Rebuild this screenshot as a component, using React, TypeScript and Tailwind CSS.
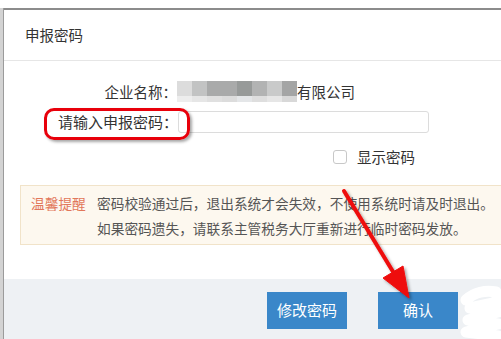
const font = { fontFamily: '"Noto Sans CJK SC", "Noto Sans", sans-serif' };

const blurTop = ['#dcdcdc', '#c2c3c3', '#a9aaaa', '#a9aaaa', '#979a99', '#b2b3b3', '#c9caca', '#a4a5a5'];
const blurBottom = ['#ededed', '#e6e6e6', '#e0e0e0', '#dcdcdc', '#e4e6e8', '#dedede', '#e6e6e6', '#d8d8d8'];

function BlurredName() {
  return (
    <div className="flex h-[21px] w-[120px] flex-col">
      <div className="flex h-[15px]">
        {blurTop.map((c, i) => (
          <div key={i} className="h-full flex-1" style={{ backgroundColor: c }} />
        ))}
      </div>
      <div className="flex h-[6px]">
        {blurBottom.map((c, i) => (
          <div key={i} className="h-full flex-1" style={{ backgroundColor: c }} />
        ))}
      </div>
    </div>
  );
}

export default function App() {
  return (
    <div className="relative h-[339px] w-[501px] overflow-hidden bg-white pt-[8px] text-[#333]" style={font}>
      <div className="flex h-full">
        {/* page edge behind dialog */}
        <div className="w-[3px] shrink-0 bg-[#d3d3d3]" />
        <div className="w-[1px] shrink-0 bg-[#9b9b9b]" />

        <div className="flex w-[520px] shrink-0 flex-col border-t-2 border-[#8c8c8c] bg-white">
          {/* header */}
          <div className="flex h-[51px] items-center border-b border-[#e6e6e6] px-[21px] text-[14.5px] text-[#333]">
            申报密码
          </div>

          {/* body */}
          <div className="flex flex-col pt-[20px] text-[14.5px]">
            <div className="flex h-[21px] items-center">
              <div className="w-[173px] text-right">企业名称：</div>
              <BlurredName />
              <span>有限公司</span>
            </div>

            <div className="mt-[9px] flex h-[22px] items-center">
              <div className="w-[174px] text-right text-[15px]">请输入申报密码：</div>
              <div className="h-[22px] w-[251px] rounded-[3px] border border-[#dcdcdc] bg-white" />
            </div>

            <div className="mt-[16px] flex h-[16px] items-center pl-[329px]">
              <div className="h-[14px] w-[14px] rounded-[3px] border border-[#c8c8c8] bg-white" />
              <span className="ml-[10px]">显示密码</span>
            </div>

            <div className="mt-[20px] ml-[16px] flex h-[60px] border border-[#f1e3c9] bg-[#fdf8ef] pt-[5px] pl-[10px] text-[13.7px] leading-[25px] text-[#555]">
              <span className="w-[66px] shrink-0 text-[#e2775a]">温馨提醒</span>
              <div className="flex flex-col whitespace-nowrap">
                <span>密码校验通过后，退出系统才会失效，不使用系统时请及时退出。</span>
                <span>如果密码遗失，请联系主管税务大厅重新进行临时密码发放。</span>
              </div>
            </div>
          </div>

          {/* footer */}
          <div className="mt-[34px] flex flex-1 gap-[31px] bg-[#eef1f4] pt-[13px] pl-[263px]">
            <button className="h-[37px] w-[80px] bg-[#3a87c9] text-[15px] text-white">修改密码</button>
            <button className="h-[37px] w-[80px] bg-[#3a87c9] text-[15px] text-white">确认</button>
          </div>
        </div>
      </div>

      {/* red highlight annotation */}
      <div className="pointer-events-none absolute top-[108px] left-[44px] h-[32px] w-[146px] rounded-[10px] border-[3px] border-[#e8000b] shadow-[2px_2px_3px_rgba(0,0,0,0.35)]" />

      {/* red arrow annotation */}
      <svg className="pointer-events-none absolute top-0 left-0" width="501" height="339">
        <defs>
          <filter id="sh" x="-20%" y="-20%" width="140%" height="140%">
            <feDropShadow dx="2" dy="2" stdDeviation="1.5" floodColor="#000" floodOpacity="0.35" />
          </filter>
        </defs>
        <g filter="url(#sh)" fill="#ee0a0a" stroke="#ee0a0a">
          <line x1="344" y1="191" x2="395" y2="275" strokeWidth="4" strokeLinecap="round" />
          <polygon points="409,298 383,278 403,266" strokeWidth="1" />
        </g>
      </svg>

      {/* white scribble */}
      <svg className="pointer-events-none absolute top-0 left-0" width="501" height="339">
        <path
          d="M466 300 C474 292 486 290 496 292 L498 302 L470 308 L498 312 L468 320 L498 324 L466 332 L498 336"
          fill="none"
          stroke="#ffffff"
          strokeWidth="11"
          strokeLinejoin="round"
          strokeLinecap="round"
        />
      </svg>
    </div>
  );
}
